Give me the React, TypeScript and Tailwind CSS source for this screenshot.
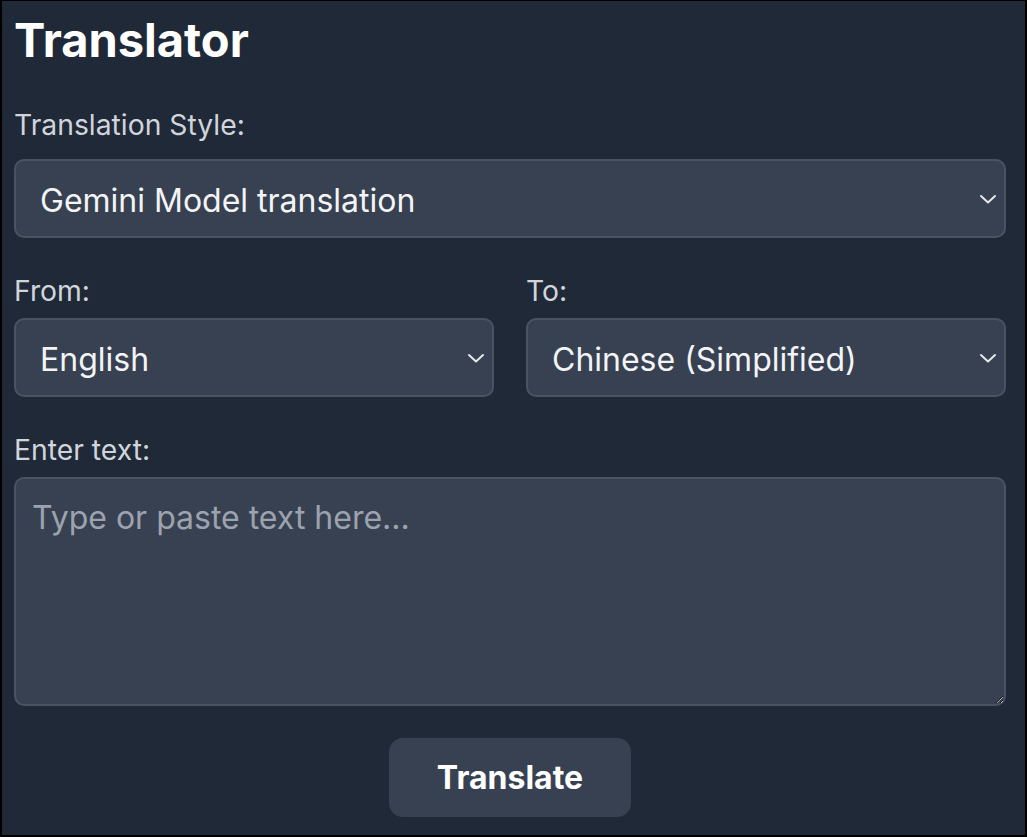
import React from 'react';

const Chevron: React.FC = () => (
  <svg className="pointer-events-none absolute right-[9px] top-1/2 -translate-y-1/2" width="18" height="12" viewBox="0 0 18 12" fill="none">
    <path d="M2 3l7 6.5L16 3" stroke="#e5e7eb" strokeWidth="2" strokeLinecap="round" strokeLinejoin="round" />
  </svg>
);

const Select: React.FC<{ value: string; options: string[] }> = ({ value, options }) => (
  <div className="relative">
    <select
      defaultValue={value}
      className="w-full h-[79px] appearance-none rounded-[10px] border-2 border-[#4a5361] bg-[#374151] pl-[24px] pr-[40px] pt-[5px] text-[32px] text-[#f3f4f6] outline-none"
    >
      {options.map((o) => (
        <option key={o}>{o}</option>
      ))}
    </select>
    <Chevron />
  </div>
);

export default function App() {
  return (
    <div
      className="w-[1027px] h-[837px] border-l-2 border-r-2 border-b-2 border-t border-black bg-[#1f2937] text-[#d1d5db]"
      style={{ fontFamily: 'Inter, "Noto Sans", sans-serif' }}
    >
      <div className="ml-[12px] w-[992px] pt-[15px] flex flex-col">
        <h1 className="text-[47px] leading-[48px] font-bold text-white">Translator</h1>

        <label className="mt-[44px] text-[28.3px] leading-[34px]">Translation Style:</label>
        <div className="mt-[17px]">
          <Select value="Gemini Model translation" options={['Gemini Model translation', 'Standard translation']} />
        </div>

        <div className="mt-[36px] grid grid-cols-2 gap-[32px]">
          <div className="flex flex-col">
            <label className="text-[28.3px] leading-[34px]">From:</label>
            <div className="mt-[10px]">
              <Select value="English" options={['English', 'Chinese (Simplified)', 'Japanese']} />
            </div>
          </div>
          <div className="flex flex-col">
            <label className="text-[28.3px] leading-[34px]">To:</label>
            <div className="mt-[10px]">
              <Select value="Chinese (Simplified)" options={['Chinese (Simplified)', 'English', 'Japanese']} />
            </div>
          </div>
        </div>

        <label className="mt-[36px] text-[28.3px] leading-[34px]">Enter text:</label>
        <textarea
          placeholder="Type or paste text here..."
          className="mt-[10px] h-[229px] rounded-[10px] border-2 border-[#4a5361] bg-[#374151] px-[16px] py-[20px] text-[32px] leading-[38px] text-[#f3f4f6] placeholder:text-[#9ca3af] outline-none"
        />

        <div className="mt-[32px] flex justify-center">
          <button className="w-[242px] h-[79px] rounded-[14px] bg-[#374151] text-[32px] font-bold text-white">
            Translate
          </button>
        </div>
      </div>
    </div>
  );
}
